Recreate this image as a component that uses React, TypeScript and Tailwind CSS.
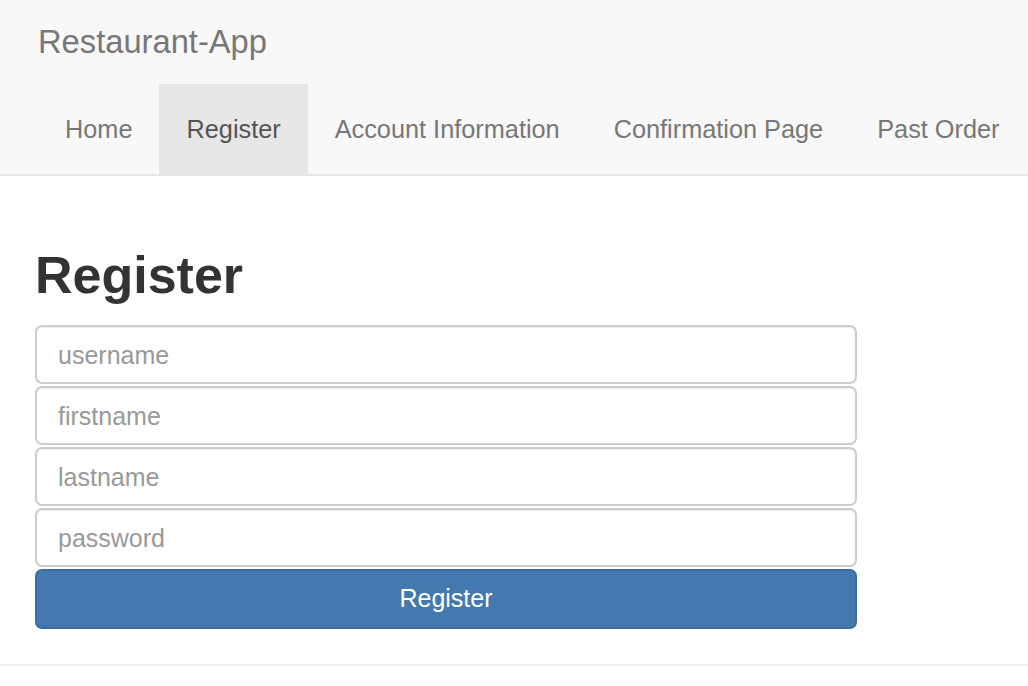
import React from "react";

export default function App() {
  const links = ["Home", "Register", "Account Information", "Confirmation Page", "Past Order"];
  const fields = ["username", "firstname", "lastname", "password"];
  return (
    <div className="w-[1028px] h-[686px] bg-white overflow-hidden" style={{ fontFamily: '"Liberation Sans", Arial, sans-serif' }}>
      <nav className="bg-[#f8f8f8] border-b-2 border-[#e7e7e7]">
        <div className="h-[84px] flex items-center pl-[38px] text-[32.7px] text-[#777]">Restaurant-App</div>
        <ul className="flex pl-[38px] h-[90px] overflow-hidden">
          {links.map((l) => (
            <li
              key={l}
              className={
                l === "Register"
                  ? "shrink-0 whitespace-nowrap px-[27px] pt-[1px] flex items-center text-[25.3px] text-[#555] bg-[#e7e7e7]"
                  : "shrink-0 whitespace-nowrap px-[27px] pt-[1px] flex items-center text-[25.3px] text-[#777]"
              }
            >
              {l}
            </li>
          ))}
        </ul>
      </nav>
      <main className="pl-[35px]">
        <h2 className="mt-[73px] mb-[23px] text-[52px] leading-[53px] font-bold text-[#333]">Register</h2>
        <div className="w-[822px] flex flex-col gap-[2px]">
          {fields.map((f) => (
            <input
              key={f}
              type={f === "password" ? "password" : "text"}
              placeholder={f}
              className="h-[59px] border-2 border-[#ccc] rounded-[7px] px-[21px] pt-[2px] text-[25px] text-[#555] placeholder:text-[#999] outline-none shadow-[inset_0_1px_1px_rgba(0,0,0,0.075)]"
            />
          ))}
          <button className="h-[60px] bg-[#4479b0] border-2 border-[#3b6ca2] rounded-[7px] text-white text-[25px]">
            Register
          </button>
        </div>
      </main>
      <div className="mt-[35px] border-t-2 border-[#eee]" />
    </div>
  );
}
